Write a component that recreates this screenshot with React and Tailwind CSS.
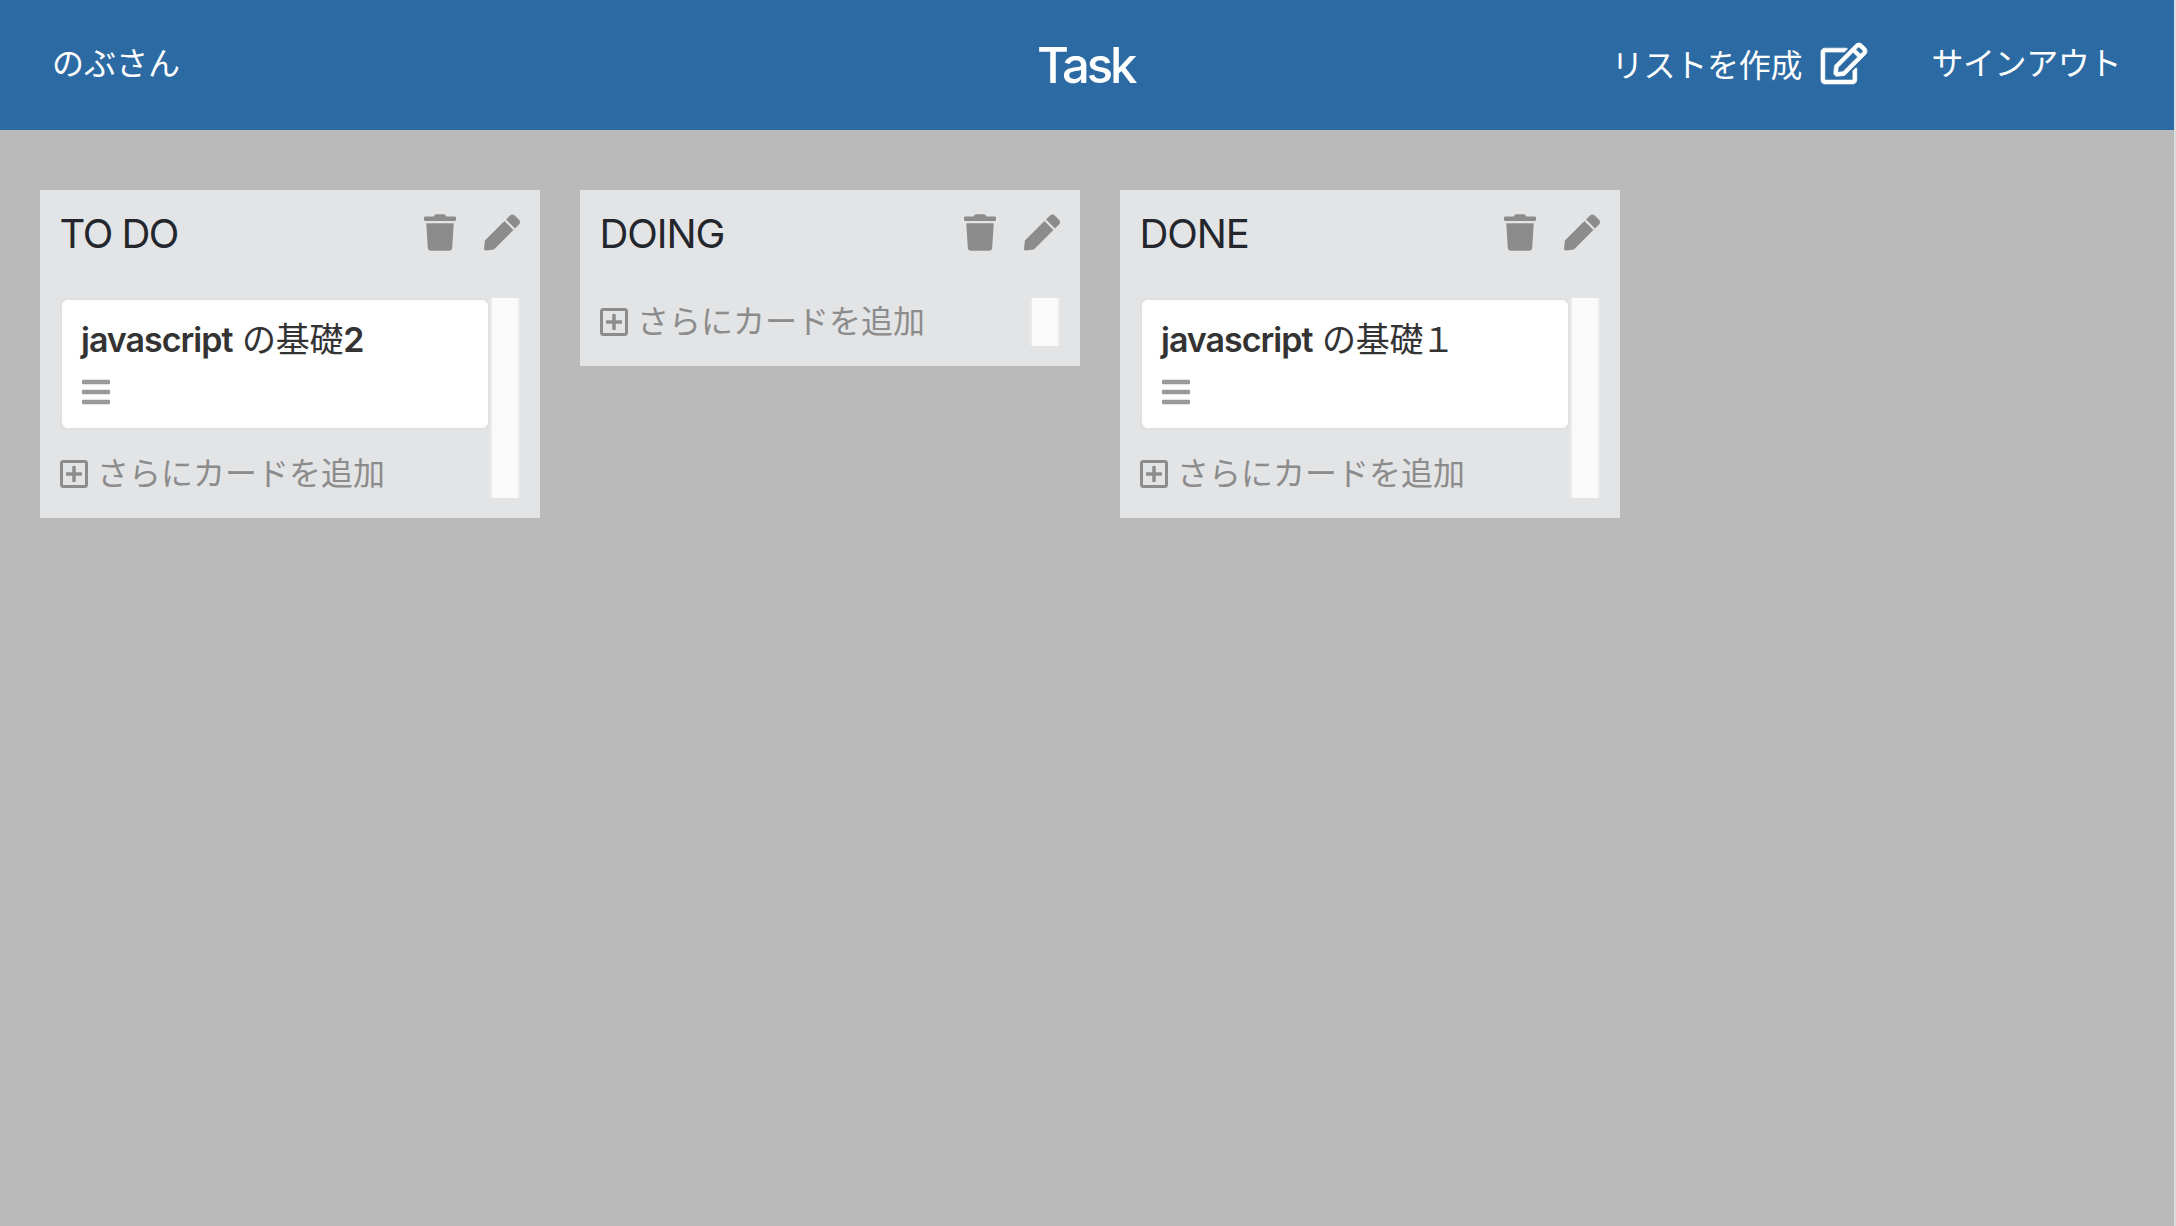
import { FaTrash, FaPen, FaRegEdit, FaRegPlusSquare, FaBars } from "react-icons/fa";

const lists = [
  { title: "TO DO", tracking: "tracking-[-1.5px]", cards: [{ latin: "javascript", rest: "の基礎", digit: "2" }] },
  { title: "DOING", tracking: "tracking-[-1.1px]", cards: [] },
  { title: "DONE", tracking: "tracking-[-1.1px]", cards: [{ latin: "javascript", rest: "の基礎", wideDigit: "１" }] },
];

function Card({ card }) {
  return (
    <div className="flex h-[132px] flex-col rounded-lg border-2 border-[#e0e0e0] bg-white px-5 pt-5">
      <div className="h-[40px] text-[34px] leading-[40px] whitespace-pre text-[#333333]">
        <span className="ml-[-1px] font-semibold tracking-[-1px]">{card.latin} </span>
        <span className="ml-[2px] tracking-[-0.3px]">{card.rest}</span>
        {card.digit && <span className="font-semibold">{card.digit}</span>}
        {card.wideDigit && <span className="ml-[-2px]">{card.wideDigit}</span>}
      </div>
      <FaBars className="mt-4 h-8 w-7 text-[#999999]" />
    </div>
  );
}

function List({ list }) {
  return (
    <section className="w-[500px] bg-[#e3e4e6] px-5 pb-5">
      <header className="flex h-[108px] items-start justify-between">
        <h2 className={`mt-5 ml-[-0.5px] text-[40px] leading-[48px] text-[#24262d] ${list.tracking}`}>{list.title}</h2>
        <div className="mt-6 flex gap-7 text-[#8c8c8c]">
          <FaTrash className="h-[37px] w-8" />
          <FaPen className="h-[37px] w-9" />
        </div>
      </header>
      <div className="flex">
        <div className="w-[430px]">
          {list.cards.map((card) => (
            <div key={card.latin} className="pb-5">
              <Card card={card} />
            </div>
          ))}
          <button className="flex h-12 items-center text-[#8c8c8c]">
            <FaRegPlusSquare className="h-8 w-7" />
            <span className="ml-[9px] text-[32px] leading-[48px]">さらにカードを追加</span>
          </button>
        </div>
        <div className="w-[30px] border-x-2 border-[#ebebeb] bg-[#fafafa]" />
      </div>
    </section>
  );
}

export default function App() {
  return (
    <div className="flex min-h-screen flex-col border-r-2 border-[#dddddd] bg-[#bababa] font-['Inter','Noto_Sans_CJK_JP',sans-serif]">
      <header className="grid h-[130px] grid-cols-3 items-center bg-[#2c6aa3] text-[32px] leading-[48px] text-white">
        <div className="pb-[2px] pl-[52px]">のぶさん</div>
        <h1 className="pt-[2px] pr-[3px] text-center text-[49px] leading-[60px] font-medium tracking-[-3.2px]">Task</h1>
        <nav className="flex items-center justify-end pr-[53px]">
          <button className="flex items-center pb-1">
            <span className="pt-[6px] tracking-[-0.2px]">リストを作成</span>
            <FaRegEdit className="ml-[19px] h-[41px] w-[46px] overflow-visible [stroke-width:9]" />
          </button>
          <button className="ml-[64px] pb-[2px] tracking-[-0.4px]">サインアウト</button>
        </nav>
      </header>
      <main className="flex items-start gap-10 px-10 pt-[60px]">
        {lists.map((list) => (
          <List key={list.title} list={list} />
        ))}
      </main>
    </div>
  );
}
